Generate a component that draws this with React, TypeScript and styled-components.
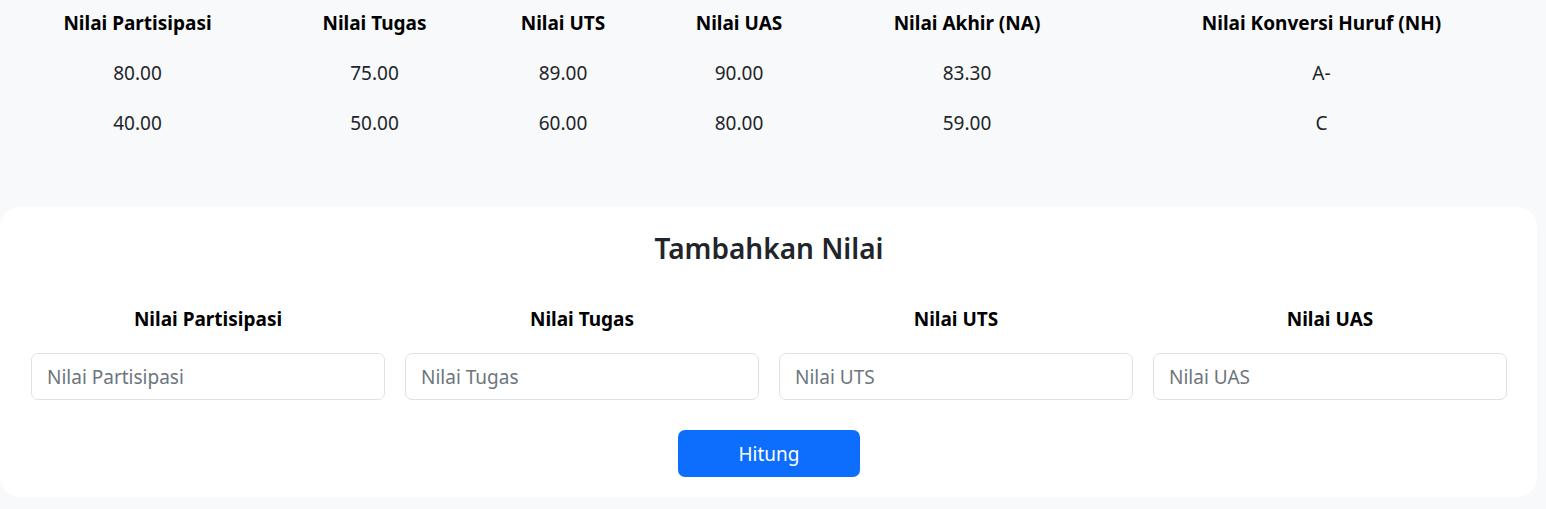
import React from "react";
import styled, { createGlobalStyle } from "styled-components";

const Global = createGlobalStyle`
  html, body { margin: 0; padding: 0; }
  body {
    background: #f8f9fa;
    font-family: "Noto Sans", "Open Sans", sans-serif;
    color: #212529;
    font-size: 20px;
  }
  * { box-sizing: border-box; }
`;

const Page = styled.div`
  width: 1546px;
  height: 509px;
  display: flex;
  flex-direction: column;
`;

const Table = styled.div`
  display: grid;
  grid-template-columns: 275px 199px 178px 174px 282px 427px;
  width: 1535px;
  margin-bottom: 59px;
`;

const HeadCell = styled.div`
  text-align: center;
  font-weight: 700;
  color: #000;
  line-height: 30px;
  padding: 8px 0 10px;
  font-size: 19px;
`;

const Cell = styled.div`
  text-align: center;
  line-height: 30px;
  padding: 10px 0;
  font-size: 19px;
`;

const Card = styled.section`
  width: 1537px;
  background: #fff;
  border-radius: 20px;
  padding: 20px 30px 20px 31px;
  display: flex;
  flex-direction: column;
  align-items: center;
`;

const Title = styled.h3`
  margin: 0 0 35px;
  font-size: 28px;
  font-weight: 600;
  line-height: 42px;
  color: #212529;
`;

const Fields = styled.div`
  width: 100%;
  display: grid;
  grid-template-columns: repeat(4, 1fr);
  column-gap: 20px;
`;

const Field = styled.div`
  display: flex;
  flex-direction: column;
  align-items: stretch;
`;

const Label = styled.label`
  text-align: center;
  font-weight: 700;
  color: #000;
  line-height: 30px;
  font-size: 19px;
  margin-bottom: 19px;
`;

const Input = styled.input`
  height: 47px;
  border: 1px solid #dee2e6;
  border-radius: 7px;
  padding: 1px 15px 0;
  font-family: inherit;
  font-size: 19px;
  color: #212529;
  background: #fff;
  outline: none;
  &::placeholder { color: #6c757d; }
`;

const Button = styled.button`
  margin-top: 30px;
  width: 182px;
  height: 47px;
  border: none;
  border-radius: 7px;
  background: #0d6efd;
  color: #fff;
  font-family: inherit;
  font-size: 19px;
  padding-top: 1px;
  cursor: pointer;
`;

const headers = [
  "Nilai Partisipasi",
  "Nilai Tugas",
  "Nilai UTS",
  "Nilai UAS",
  "Nilai Akhir (NA)",
  "Nilai Konversi Huruf (NH)",
];

const rows = [
  ["80.00", "75.00", "89.00", "90.00", "83.30", "A-"],
  ["40.00", "50.00", "60.00", "80.00", "59.00", "C"],
];

const fields = ["Nilai Partisipasi", "Nilai Tugas", "Nilai UTS", "Nilai UAS"];

export default function App() {
  return (
    <Page>
      <Global />
      <Table>
        {headers.map((h) => (
          <HeadCell key={h}>{h}</HeadCell>
        ))}
        {rows.map((r, i) =>
          r.map((v, j) => <Cell key={`${i}-${j}`}>{v}</Cell>)
        )}
      </Table>
      <Card>
        <Title>Tambahkan Nilai</Title>
        <Fields>
          {fields.map((f) => (
            <Field key={f}>
              <Label>{f}</Label>
              <Input placeholder={f} />
            </Field>
          ))}
        </Fields>
        <Button>Hitung</Button>
      </Card>
    </Page>
  );
}
